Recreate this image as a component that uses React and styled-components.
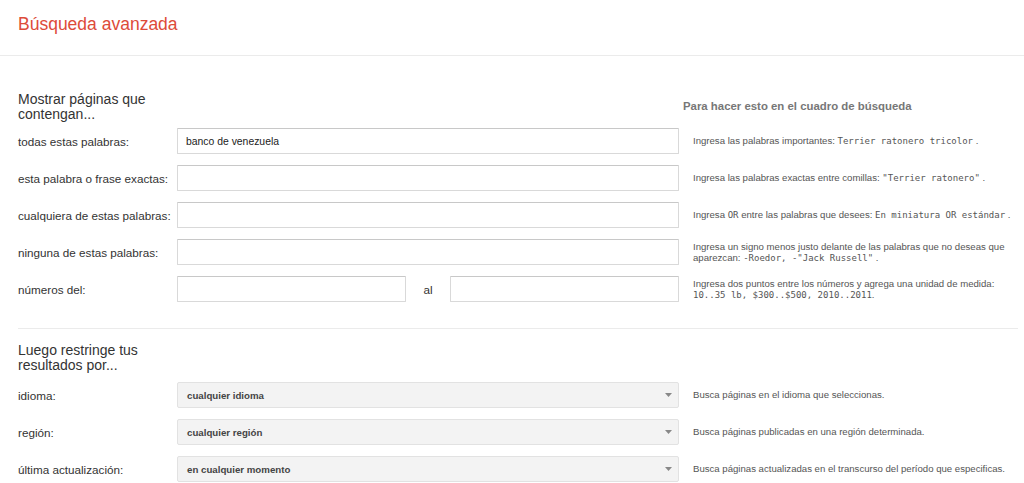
import styled, { createGlobalStyle } from 'styled-components';

const GlobalStyle = createGlobalStyle`
  body {
    margin: 0;
    background: #fff;
    font-family: Arial, "Liberation Sans", sans-serif;
    color: #222;
  }
`;

// header
const Header = styled.header`
  height: 56px;
  box-sizing: border-box;
  padding: 14px 18px 0;
  border-bottom: 1px solid #ebebeb;
`;

const Title = styled.h1`
  margin: 0;
  font-size: 17.5px;
  line-height: 20px;
  font-weight: normal;
  color: #dd4b39;
`;

// frame
const Main = styled.main`
  padding: 36px 6px 0 18px;
`;

const SectionHead = styled.div`
  display: grid;
  grid-template-columns: 159px 502px 1fr;
  align-items: center;
  margin-bottom: ${(props) => props.$gap}px;
`;

const Heading = styled.h2`
  margin: 0;
  width: 150px;
  font-size: 14px;
  line-height: 15px;
  font-weight: normal;
  color: #333;
`;

const ColumnTitle = styled.div`
  padding: 0 0 3px 4px;
  font-size: 11.4px;
  font-weight: bold;
  color: #777;
`;

// rows
const Rows = styled.div`
  display: flex;
  flex-direction: column;
  gap: 11px;
`;

const Row = styled.div`
  display: grid;
  grid-template-columns: 159px 502px 1fr;
  align-items: center;
  height: 26px;
`;

const Label = styled.label`
  font-size: 11.7px;
  color: #333;
`;

const TextInput = styled.input`
  box-sizing: border-box;
  width: 100%;
  min-width: 0;
  height: 26px;
  padding: 0 8px;
  border: 1px solid #d9d9d9;
  border-top-color: #c8c8c8;
  border-radius: 1px;
  font-family: Arial, "Liberation Sans", sans-serif;
  font-size: 10.4px;
  color: #222;
  outline: none;
`;

const RangeWrapper = styled.div`
  display: grid;
  grid-template-columns: 1fr 44px 1fr;
  align-items: center;
`;

const RangeSep = styled.span`
  text-align: center;
  font-size: 11.7px;
  color: #333;
`;

const Select = styled.div`
  box-sizing: border-box;
  height: 26px;
  display: flex;
  align-items: center;
  justify-content: space-between;
  padding: 0 6px 0 9px;
  background: #f3f3f3;
  border: 1px solid #e2e2e2;
  border-radius: 2px;
  font-size: 9.7px;
  font-weight: bold;
  color: #444;
`;

const Help = styled.div`
  padding-left: 14px;
  font-size: 9.6px;
  line-height: 11.5px;
  color: #555;
`;

const Code = styled.code`
  font-family: "DejaVu Sans Mono", "Liberation Mono", monospace;
  font-size: 9px;
  line-height: 1;
  color: #555;
`;

// component
const Divider = styled.hr`
  margin: 26px 0 14px;
  border: 0;
  border-top: 1px solid #ebebeb;
`;

const textRows = [
  {
    label: 'todas estas palabras:',
    value: 'banco de venezuela',
    help: (
      <>
        Ingresa las palabras importantes: <Code>Terrier ratonero tricolor</Code> .
      </>
    ),
  },
  {
    label: 'esta palabra o frase exactas:',
    help: (
      <>
        Ingresa las palabras exactas entre comillas: <Code>"Terrier ratonero"</Code> .
      </>
    ),
  },
  {
    label: 'cualquiera de estas palabras:',
    help: (
      <>
        Ingresa <Code>OR</Code> entre las palabras que desees: <Code>En miniatura OR estándar</Code> .
      </>
    ),
  },
  {
    label: 'ninguna de estas palabras:',
    help: (
      <>
        Ingresa un signo menos justo delante de las palabras que no deseas que aparezcan: <Code>-Roedor, -"Jack Russell"</Code> .
      </>
    ),
  },
];

const selectRows = [
  { label: 'idioma:', value: 'cualquier idioma', help: 'Busca páginas en el idioma que seleccionas.' },
  { label: 'región:', value: 'cualquier región', help: 'Busca páginas publicadas en una región determinada.' },
  {
    label: 'última actualización:',
    value: 'en cualquier momento',
    help: 'Busca páginas actualizadas en el transcurso del período que especificas.',
  },
];

const Arrow = () => (
  <svg width="7" height="4" viewBox="0 0 7 4">
    <path d="M0 0h7L3.5 4z" fill="#888" />
  </svg>
);

const App = () => {
  return (
    <>
      <GlobalStyle />
      <Header>
        <Title>Búsqueda avanzada</Title>
      </Header>

      <Main>
        <SectionHead $gap={6}>
          <Heading>Mostrar páginas que contengan...</Heading>
          <span />
          <ColumnTitle>Para hacer esto en el cuadro de búsqueda</ColumnTitle>
        </SectionHead>

        <Rows>
          {textRows.map((row) => (
            <Row key={row.label}>
              <Label>{row.label}</Label>
              <TextInput type="text" defaultValue={row.value || ''} />
              <Help>{row.help}</Help>
            </Row>
          ))}
          <Row>
            <Label>números del:</Label>
            <RangeWrapper>
              <TextInput type="text" />
              <RangeSep>al</RangeSep>
              <TextInput type="text" />
            </RangeWrapper>
            <Help>
              Ingresa dos puntos entre los números y agrega una unidad de medida:{' '}
              <Code>10..35 lb, $300..$500, 2010..2011</Code>.
            </Help>
          </Row>
        </Rows>

        <Divider />

        <SectionHead $gap={9}>
          <Heading>Luego restringe tus resultados por...</Heading>
        </SectionHead>

        <Rows>
          {selectRows.map((row) => (
            <Row key={row.label}>
              <Label>{row.label}</Label>
              <Select>
                <span>{row.value}</span>
                <Arrow />
              </Select>
              <Help>{row.help}</Help>
            </Row>
          ))}
        </Rows>
      </Main>
    </>
  );
};

export default App;
